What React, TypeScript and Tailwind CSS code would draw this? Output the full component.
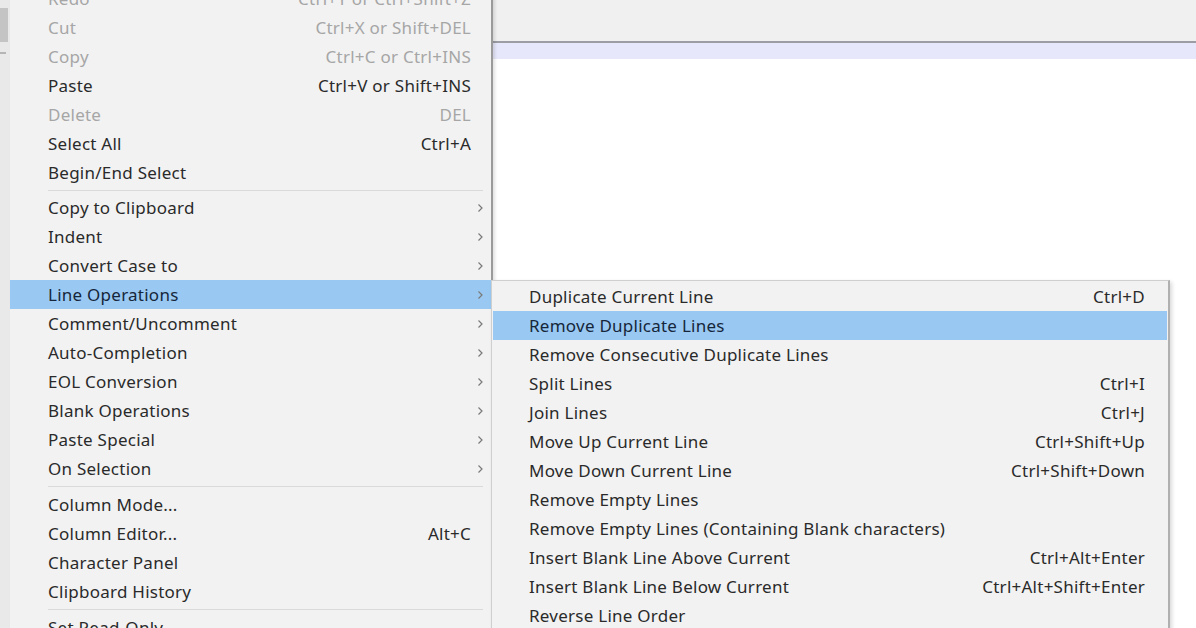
import React from 'react';

type Item =
  | { kind: 'sep'; h?: string }
  | { kind: 'item'; label: string; shortcut?: string; sub?: boolean; disabled?: boolean; active?: boolean };

const mainItems: Item[] = [
  { kind: 'item', label: 'Redo', shortcut: 'Ctrl+Y or Ctrl+Shift+Z', disabled: true },
  { kind: 'item', label: 'Cut', shortcut: 'Ctrl+X or Shift+DEL', disabled: true },
  { kind: 'item', label: 'Copy', shortcut: 'Ctrl+C or Ctrl+INS', disabled: true },
  { kind: 'item', label: 'Paste', shortcut: 'Ctrl+V or Shift+INS' },
  { kind: 'item', label: 'Delete', shortcut: 'DEL', disabled: true },
  { kind: 'item', label: 'Select All', shortcut: 'Ctrl+A' },
  { kind: 'item', label: 'Begin/End Select' },
  { kind: 'sep', h: 'h-[6px]' },
  { kind: 'item', label: 'Copy to Clipboard', sub: true },
  { kind: 'item', label: 'Indent', sub: true },
  { kind: 'item', label: 'Convert Case to', sub: true },
  { kind: 'item', label: 'Line Operations', sub: true, active: true },
  { kind: 'item', label: 'Comment/Uncomment', sub: true },
  { kind: 'item', label: 'Auto-Completion', sub: true },
  { kind: 'item', label: 'EOL Conversion', sub: true },
  { kind: 'item', label: 'Blank Operations', sub: true },
  { kind: 'item', label: 'Paste Special', sub: true },
  { kind: 'item', label: 'On Selection', sub: true },
  { kind: 'sep', h: 'h-[7px]' },
  { kind: 'item', label: 'Column Mode...' },
  { kind: 'item', label: 'Column Editor...', shortcut: 'Alt+C' },
  { kind: 'item', label: 'Character Panel' },
  { kind: 'item', label: 'Clipboard History' },
  { kind: 'sep', h: 'h-[7px]' },
  { kind: 'item', label: 'Set Read-Only' },
];

const lineOps: Item[] = [
  { kind: 'item', label: 'Duplicate Current Line', shortcut: 'Ctrl+D' },
  { kind: 'item', label: 'Remove Duplicate Lines', active: true },
  { kind: 'item', label: 'Remove Consecutive Duplicate Lines' },
  { kind: 'item', label: 'Split Lines', shortcut: 'Ctrl+I' },
  { kind: 'item', label: 'Join Lines', shortcut: 'Ctrl+J' },
  { kind: 'item', label: 'Move Up Current Line', shortcut: 'Ctrl+Shift+Up' },
  { kind: 'item', label: 'Move Down Current Line', shortcut: 'Ctrl+Shift+Down' },
  { kind: 'item', label: 'Remove Empty Lines' },
  { kind: 'item', label: 'Remove Empty Lines (Containing Blank characters)' },
  { kind: 'item', label: 'Insert Blank Line Above Current', shortcut: 'Ctrl+Alt+Enter' },
  { kind: 'item', label: 'Insert Blank Line Below Current', shortcut: 'Ctrl+Alt+Shift+Enter' },
  { kind: 'item', label: 'Reverse Line Order' },
];

function MenuRow({ item, submenu }: { item: Item; submenu?: boolean }) {
  if (item.kind === 'sep') {
    return (
      <div className={`${item.h} flex items-center pl-[38px] pr-[8px]`}>
        <div className="h-px w-full bg-[#dadada]" />
      </div>
    );
  }
  const color = item.disabled ? 'text-[#a6a6a6]' : item.active ? 'text-[#16263a]' : 'text-[#2a2a2a]';
  return (
    <div
      className={`h-[29px] flex items-center ${submenu ? 'pl-[36px] pr-[22px] mx-px' : 'pl-[38px] pr-[2px]'} ${
        item.active ? 'bg-[#99c9f2]' : ''
      } ${color}`}
    >
      <span className="flex-1 whitespace-nowrap">{item.label}</span>
      {item.shortcut && <span className="whitespace-nowrap">{item.shortcut}</span>}
      {!submenu && (
        <span className="w-[18px] flex justify-center text-[#7a7a7a]">
          {item.sub && (
            <svg width="7" height="10" viewBox="0 0 7 10">
              <path d="M1.5 1.5 L5 5 L1.5 8.5" fill="none" stroke="currentColor" strokeWidth="1.2" />
            </svg>
          )}
        </span>
      )}
    </div>
  );
}

export default function App() {
  return (
    <div
      className="relative w-[1196px] h-[628px] overflow-hidden bg-white text-[17px] tracking-[0.25px]"
      style={{ fontFamily: '"Noto Sans", "Open Sans", sans-serif' }}
    >
      {/* editor behind the menus */}
      <div className="flex h-full">
        <div className="w-[10px] bg-[#e9e9e9] flex flex-col">
          <div className="h-[8px]" />
          <div className="h-[34px] w-[8px] bg-[#c4c4c4]" />
          <div className="h-[10px]" />
          <div className="h-[2px] w-[6px] bg-[#b5b5b5]" />
        </div>
        <div className="flex-1 flex flex-col">
          <div className="h-[41px] bg-[#f0f0f0]" />
          <div className="h-[2px] bg-[#9c9ca4]" />
          <div className="h-[16px] bg-[#e7e7fb]" />
          <div className="flex-1 bg-white" />
        </div>
      </div>

      {/* Edit menu */}
      <div className="absolute left-[10px] top-[-16px] w-[483px] bg-[#f2f2f2] border-r-[2px] border-[#9a9a9a] shadow-[2px_0_3px_rgba(0,0,0,0.12)]">
        {mainItems.map((it, i) => (
          <MenuRow key={i} item={it} />
        ))}
      </div>

      {/* Line Operations submenu */}
      <div className="absolute left-[491px] top-[280px] w-[679px] pt-px bg-[#f2f2f2] border border-[#cfcfcf] border-r-[2px] border-r-[#b0b0b0] shadow-[2px_2px_4px_rgba(0,0,0,0.15)]">
        {lineOps.map((it, i) => (
          <MenuRow key={i} item={it} submenu />
        ))}
      </div>
    </div>
  );
}
